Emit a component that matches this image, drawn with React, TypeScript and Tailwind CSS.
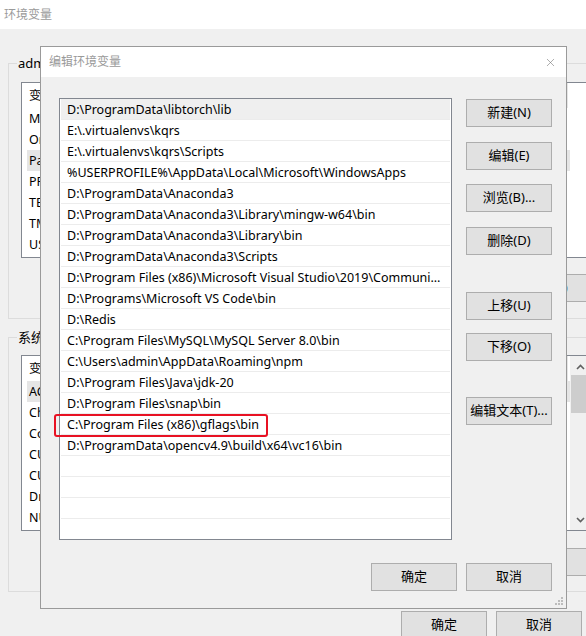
import { X } from "lucide-react";

// ---- Data ---------------------------------------------------------------

const paths = [
  "D:\\ProgramData\\libtorch\\lib",
  "E:\\.virtualenvs\\kqrs",
  "E:\\.virtualenvs\\kqrs\\Scripts",
  "%USERPROFILE%\\AppData\\Local\\Microsoft\\WindowsApps",
  "D:\\ProgramData\\Anaconda3",
  "D:\\ProgramData\\Anaconda3\\Library\\mingw-w64\\bin",
  "D:\\ProgramData\\Anaconda3\\Library\\bin",
  "D:\\ProgramData\\Anaconda3\\Scripts",
  "D:\\Program Files (x86)\\Microsoft Visual Studio\\2019\\Community\\VC\\Tools\\MSVC\\bin",
  "D:\\Programs\\Microsoft VS Code\\bin",
  "D:\\Redis",
  "C:\\Program Files\\MySQL\\MySQL Server 8.0\\bin",
  "C:\\Users\\admin\\AppData\\Roaming\\npm",
  "D:\\Program Files\\Java\\jdk-20",
  "D:\\Program Files\\snap\\bin",
  "C:\\Program Files (x86)\\gflags\\bin",
  "D:\\ProgramData\\opencv4.9\\build\\x64\\vc16\\bin",
  "",
  "",
  "",
];

const userVars = ["MOZ_PLUGIN_PATH", "OneDrive", "Path", "PROMPT", "TEMP", "TMP", "USERNAME"];
const sysVars = ["ACSvcPort", "ChocolateyInstall", "ComSpec", "CUDA_PATH", "CUDA_PATH_V12_1", "DriverData", "NUMBER_OF_PROCESSORS"];

const sideButtons = [
  { label: "新建(N)", mt: "mt-[1px]" },
  { label: "编辑(E)", mt: "mt-[15px]" },
  { label: "浏览(B)...", mt: "mt-[14px]" },
  { label: "删除(D)", mt: "mt-[15px]" },
  { label: "上移(U)", mt: "mt-[37px]" },
  { label: "下移(O)", mt: "mt-[13px]" },
  { label: "编辑文本(T)...", mt: "mt-[36px]" },
];

// ---- Parts ----------------------------------------------------------------

function WinButton({ label, className = "" }: { label: string; className?: string }) {
  return (
    <div
      className={`flex h-[28px] w-[86px] shrink-0 items-center justify-center border border-[#adadad] bg-[#e1e1e1] text-[13px] text-black ${className}`}
    >
      {label}
    </div>
  );
}

function VarList({ items, selected, scroll }: { items: string[]; selected: number; scroll?: boolean }) {
  return (
    <div className="relative flex h-[176px] w-[567px] border border-[#828790] bg-white text-[12.5px]">
      <div className="flex-1">
        {/* column header */}
        <div className="flex h-[25px] items-center">
          <div className="h-full w-[546px] border-r border-[#e5e5e5] pl-[7px] leading-[25px]">变量</div>
        </div>
        {items.map((v, i) => (
          <div
            key={v}
            className={`ml-[5px] h-[21px] w-[543px] pl-[2px] leading-[21px] ${i === selected ? "bg-[#e5e5e5]" : ""}`}
          >
            {v}
          </div>
        ))}
      </div>
      {scroll && (
        <div className="flex w-[17px] flex-col items-center bg-[#f0f0f0]">
          <svg width="9" height="6" viewBox="0 0 9 6" className="mt-[8px] ml-[3px]">
            <path d="M1 5 L4.5 1.5 L8 5" stroke="#606060" strokeWidth="1.6" fill="none" />
          </svg>
          <div className="mt-[5px] h-[38px] w-[15px] bg-[#cdcdcd]" />
          <div className="flex-1" />
          <svg width="9" height="6" viewBox="0 0 9 6" className="mb-[7px] ml-[3px]">
            <path d="M1 1 L4.5 4.5 L8 1" stroke="#606060" strokeWidth="1.6" fill="none" />
          </svg>
        </div>
      )}
    </div>
  );
}

function GroupBox({ title, children }: { title: string; children: React.ReactNode }) {
  return (
    <div className="relative w-[594px] border border-[#dcdcdc] px-[12px]">
      <span className="absolute -top-[10px] left-[8px] bg-[#f0f0f0] px-[1px] text-[13px] leading-[18px]">{title}</span>
      {children}
    </div>
  );
}

// ---- Component ------------------------------------------------------------

export default function App() {
  return (
    <div className="relative h-[636px] w-[586px] overflow-hidden bg-[#f0f0f0] font-['Noto_Sans','Noto_Sans_CJK_SC',sans-serif] text-[13px] text-black">
      {/* Background window: 环境变量 */}
      <div className="flex w-[610px] flex-col">
        <div className="flex h-[29px] items-center bg-white pl-[4px] text-[12px] text-[#9a9a9a]">环境变量</div>
        <div className="flex flex-col px-[8px]">
          <div className="mt-[34px]">
            <GroupBox title="admin 的用户变量(U)">
              <div className="pt-[18px]">
                <VarList items={userVars} selected={2} />
              </div>
              <div className="mt-[16px] mb-[16px] flex justify-end gap-[9px]">
                <WinButton label="新建(N)..." />
                <WinButton label="编辑(E)..." />
                <WinButton label="删除(D)" />
              </div>
            </GroupBox>
          </div>
          <div className="mt-[18px]">
            <GroupBox title="系统变量(S)">
              <div className="pt-[17px]">
                <VarList items={sysVars} selected={0} scroll />
              </div>
              <div className="mt-[17px] mb-[15px] flex justify-end gap-[9px]">
                <WinButton label="新建(W)..." />
                <WinButton label="编辑(I)..." />
                <WinButton label="删除(L)" />
              </div>
            </GroupBox>
          </div>
          <div className="mt-[19px] flex gap-[9px] pl-[393px]">
            <WinButton label="确定" />
            <WinButton label="取消" />
          </div>
        </div>
      </div>

      {/* Foreground dialog: 编辑环境变量 */}
      <div className="absolute left-[40px] top-[46px] flex h-[563px] w-[527px] flex-col border border-[#9a9a9a] bg-[#f0f0f0]">
        <div className="flex h-[30px] items-center justify-between bg-white pl-[8px] pr-[9px] text-[12px] text-[#9a9a9a]">
          <span>编辑环境变量</span>
          <X size={13} strokeWidth={1.1} className="text-[#777]" />
        </div>

        <div className="flex pl-[18px] pt-[21px]">
          <div className="h-[442px] w-[393px] overflow-hidden border border-[#828790] bg-white text-[12.5px]">
            {paths.map((p, i) => (
              <div
                key={i}
                className={`mx-[1px] h-[21px] truncate border-b border-[#ececec] pl-[6px] pr-[6px] leading-[22px] ${i === 0 ? "bg-[#efefef]" : ""}`}
              >
                {p}
              </div>
            ))}
          </div>
          <div className="ml-[14px] flex flex-col">
            {sideButtons.map((b) => (
              <WinButton key={b.label} label={b.label} className={b.mt} />
            ))}
          </div>
        </div>

        <div className="mt-[23px] flex gap-[9px] pl-[330px]">
          <WinButton label="确定" />
          <WinButton label="取消" />
        </div>

        {/* red highlight over the gflags entry */}
        <div className="absolute left-[13px] top-[367px] h-[23px] w-[214px] rounded-[3px] border-2 border-[#e81123]" />

        {/* resize grip */}
        <svg width="9" height="9" viewBox="0 0 9 9" className="absolute bottom-[2px] right-[2px]">
          <rect x="6" y="0" width="2" height="2" fill="#bcbcbc" />
          <rect x="3" y="3" width="2" height="2" fill="#bcbcbc" />
          <rect x="6" y="3" width="2" height="2" fill="#bcbcbc" />
          <rect x="0" y="6" width="2" height="2" fill="#bcbcbc" />
          <rect x="3" y="6" width="2" height="2" fill="#bcbcbc" />
          <rect x="6" y="6" width="2" height="2" fill="#bcbcbc" />
        </svg>
      </div>
    </div>
  );
}
